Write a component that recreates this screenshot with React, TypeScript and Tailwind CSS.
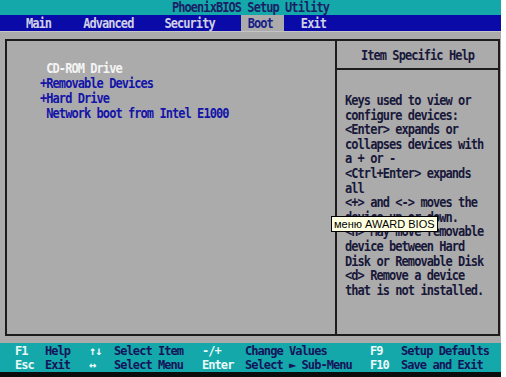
import React from 'react';

const mono = "font-['DejaVu_Sans_Mono',monospace] font-bold text-[12px] tracking-[-0.94px]";

const bootItems = [
  { text: ' CD-ROM Drive', color: 'text-[#f4f4f4]' },
  { text: '+Removable Devices', color: 'text-[#1414a8]' },
  { text: '+Hard Drive', color: 'text-[#1414a8]' },
  { text: ' Network boot from Intel E1000', color: 'text-[#1414a8]' },
];

const helpLines = [
  'Keys used to view or',
  'configure devices:',
  '<Enter> expands or',
  'collapses devices with',
  'a + or -',
  '<Ctrl+Enter> expands',
  'all',
  '<+> and <-> moves the',
  'device up or down.',
  '<n> May move removable',
  'device between Hard',
  'Disk or Removable Disk',
  '<d> Remove a device',
  'that is not installed.',
];

// key / description pairs for the bottom legend
const legend = [
  ['F1', 'Help', '↑↓', 'Select Item', '-/+', 'Change Values', 'F9', 'Setup Defaults'],
  ['Esc', 'Exit', '↔', 'Select Menu', 'Enter', 'Select ► Sub-Menu', 'F10', 'Save and Exit'],
];

const Legend: React.FC<{ row: string[] }> = ({ row }) => (
  <div className="grid grid-cols-[30px_44px_25px_88px_43px_125px_31px_1fr] h-[14px] leading-[14px] whitespace-pre">
    {row.map((t, i) => (
      <span key={i} className={i % 2 === 0 ? 'text-[#eaf8f8]' : 'text-[#14145a]'}>
        {t}
      </span>
    ))}
  </div>
);

export default function App() {
  return (
    <div className={`w-[506px] h-[377px] bg-white flex ${mono}`}>
      <div className="w-[501px] h-full flex flex-col">
        {/* Title */}
        <div className="h-[15px] bg-[#14a8aa] flex items-center justify-center text-[#1a1f66] leading-[15px]">
          <span className="scale-y-[1.15]">PhoenixBIOS Setup Utility</span>
        </div>

        {/* Menu */}
        <div className="h-[16px] bg-[#0a0aa8] flex items-stretch leading-[16px] text-[#cfd0e6]">
          <span className="ml-[26px] scale-y-[1.15]">Main</span>
          <span className="ml-[32px] scale-y-[1.15]">Advanced</span>
          <span className="ml-[31px] scale-y-[1.15]">Security</span>
          <span className="ml-[26px] pl-[7px] pr-[11px] bg-[#ababab] text-[#1a1f88]">
            <span className="inline-block scale-y-[1.15]">Boot</span>
          </span>
          <span className="ml-[17px] scale-y-[1.15]">Exit</span>
        </div>

        {/* Main area */}
        <div className="flex-1 bg-[#ababab] pt-[7px] pb-[7px] pl-[5px] pr-[1px] border-t border-[#c4c4c4]">
          <div className="h-full border-2 border-[#1c1c1c] flex">
            <div className="w-[328px] pt-[20px] pl-[33px] leading-[15px] whitespace-pre">
              {bootItems.map((b) => (
                <div key={b.text} className={`${b.color} scale-y-[1.15]`}>
                  {b.text}
                </div>
              ))}
            </div>
            <div className="flex-1 border-l-2 border-[#1c1c1c] flex flex-col text-[#18183a]">
              <div className="h-[29px] border-b-2 border-[#1c1c1c] flex items-center justify-center">
                <span className="scale-y-[1.15]">Item Specific Help</span>
              </div>
              <div className="pt-[23px] pl-[8px] leading-[14.6px] whitespace-pre">
                {helpLines.map((l, i) => (
                  <div key={i} className="scale-y-[1.15]">
                    {l}
                  </div>
                ))}
              </div>
            </div>
          </div>
        </div>

        {/* Bottom legend */}
        <div className="h-[29px] bg-[#14a8aa] pt-[1px] pl-[15px]">
          {legend.map((r, i) => (
            <Legend key={i} row={r} />
          ))}
        </div>
        <div className="h-[5px] bg-[#0c0c0c]" />
      </div>

      {/* Tooltip overlay */}
      <div className="absolute left-[331px] top-[216px] h-[16px] px-[2px] bg-[#ffffe1] border border-black text-black font-['Liberation_Sans',Arial,sans-serif] font-normal text-[11px] tracking-normal leading-[14px]">
        меню AWARD BIOS
      </div>
    </div>
  );
}
